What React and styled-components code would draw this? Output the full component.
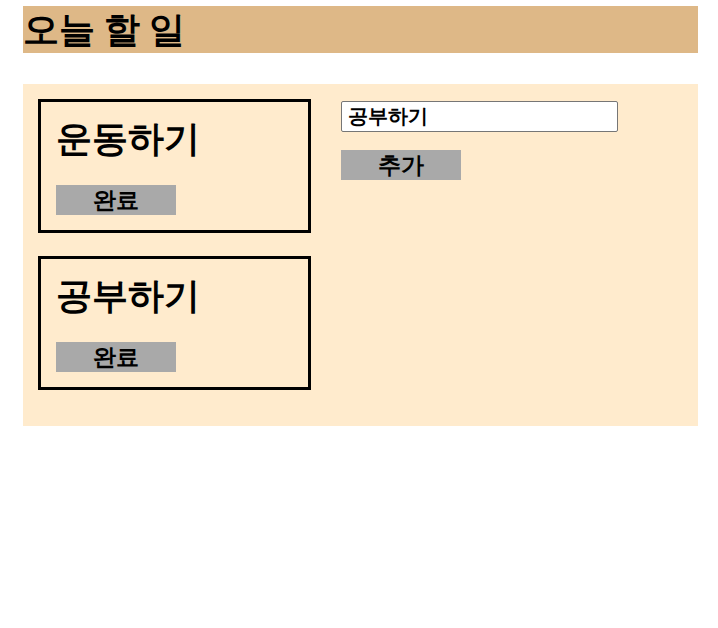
import React, { useState } from "react";
import styled, { createGlobalStyle } from "styled-components";

const GlobalStyle = createGlobalStyle`
  body {
    margin: 0;
    background: #ffffff;
    font-family: "Liberation Serif", serif;
  }
`;

const Page = styled.div`
  margin: 6px 20px 0 23px;
`;

const Header = styled.h1`
  margin: 0;
  height: 46px;
  padding-top: 1px;
  line-height: 47px;
  background-color: #deb887;
  font-size: 36px;
  font-weight: bold;
  color: #000;
`;

const Board = styled.div`
  margin-top: 31px;
  background-color: #ffebcd;
  padding: 15px 15px 13px;
  display: flex;
  align-items: flex-start;
  gap: 30px;
`;

const List = styled.div`
  display: flex;
  flex-direction: column;
`;

const Card = styled.div`
  width: 237px;
  height: 128px;
  border: 3px solid #000;
  margin-bottom: 23px;
  padding: 0 15px;
`;

const Title = styled.h2`
  margin: 12px 0 21px;
  font-size: 36px;
  line-height: 50px;
  font-weight: bold;
`;

const GrayButton = styled.button`
  width: 120px;
  height: 30px;
  padding: 0;
  border: none;
  background-color: #a9a9a9;
  color: #000;
  font-family: inherit;
  font-size: ${(p) => p.size || 23}px;
  font-weight: bold;
  display: block;
`;

const Form = styled.div`
  display: flex;
  flex-direction: column;
  align-items: flex-start;
  gap: 18px;
  padding-top: 2px;
`;

const Input = styled.input`
  width: 277px;
  height: 31px;
  box-sizing: border-box;
  border: 1px solid #767676;
  border-radius: 2px;
  padding: 0 6px;
  font-family: inherit;
  font-size: 20px;
  font-weight: bold;
  background: #fff;
`;

export default function App() {
  const [todos, setTodos] = useState(["운동하기", "공부하기"]);
  const [text, setText] = useState("공부하기");

  const handleAdd = () => {
    if (text) setTodos([...todos, text]);
  };

  const handleDone = (index) => {
    setTodos(todos.filter((_, i) => i !== index));
  };

  return (
    <>
      <GlobalStyle />
      <Page>
        <Header>오늘 할 일</Header>
        <Board>
          <List>
            {todos.map((todo, index) => (
              <Card key={index}>
                <Title>{todo}</Title>
                <GrayButton onClick={() => handleDone(index)}>완료</GrayButton>
              </Card>
            ))}
          </List>
          <Form>
            <Input value={text} onChange={(e) => setText(e.target.value)} />
            <GrayButton onClick={handleAdd}>추가</GrayButton>
          </Form>
        </Board>
      </Page>
    </>
  );
}
